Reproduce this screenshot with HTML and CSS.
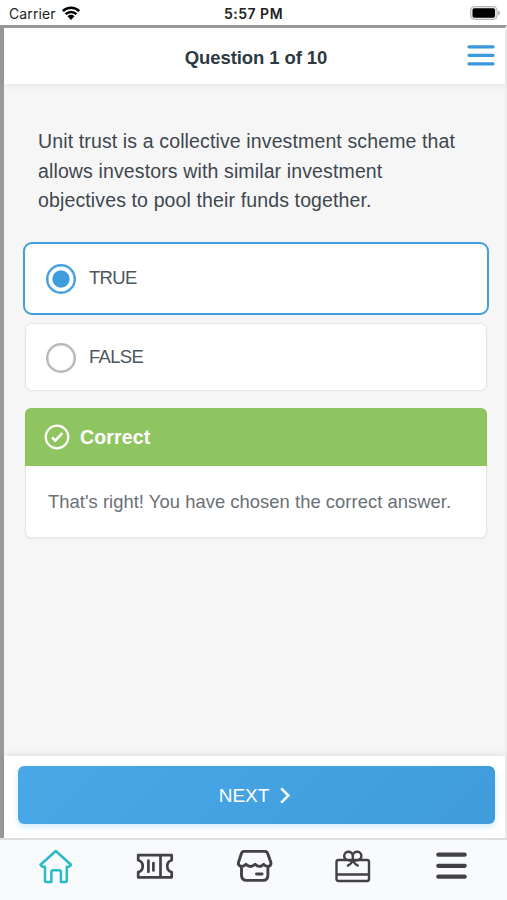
FILE: index.html
```html
<!DOCTYPE html>
<html lang="en">

<head>
    <meta charset="UTF-8">
    <meta name="viewport" content="width=device-width, initial-scale=1.0">
    <title>Quiz</title>
    <link rel="stylesheet" href="styles.css">
</head>

<body>
    <div class="status-bar">
        <div class="carrier">
            <span>Carrier</span>
            <svg width="20" height="16" viewBox="0 0 20 16">
                <path d="M1.8 5.1a11.8 11.8 0 0 1 16.4 0M4.6 8.2a7.8 7.8 0 0 1 10.8 0" fill="none" stroke="#000" stroke-width="2.5" />
                <path d="M6.5 10.3a5 5 0 0 1 7 0L10 14.1z" />
            </svg>
        </div>
        <div class="time">5:57 PM</div>
        <svg class="battery" width="32" height="16" viewBox="0 0 32 16">
            <rect x="1.5" y=".5" width="26.6" height="13" rx="4" fill="#e4e4e4" stroke="#b4b4b4" />
            <rect x="3.5" y="2.3" width="22.5" height="9.5" rx="1.8" />
            <path d="M29.2 4.8v4.6q1.8-.5 1.8-2.3T29.2 4.8z" fill="#aaa" />
        </svg>
    </div>

    <div class="page">
        <header class="header">
            <h1>Question 1 of 10</h1>
            <svg class="menu-btn" width="28" height="22" viewBox="0 0 28 22">
                <path d="M2 1.8h24M2 10.3h24M2 18.8h24" stroke="#3b99dc" stroke-width="3.3" stroke-linecap="round" />
            </svg>
        </header>

        <main class="content">
            <p class="question">Unit trust is a collective investment scheme that<br>allows investors with similar investment<br>objectives to pool their funds together.</p>

            <div class="options">
                <div class="option selected">
                    <span class="radio"></span>
                    <span class="option-text">TRUE</span>
                </div>
                <div class="option">
                    <span class="radio"></span>
                    <span class="option-text">FALSE</span>
                </div>
            </div>

            <div class="result">
                <div class="result-title">
                    <svg width="26" height="26" viewBox="0 0 26 26" fill="none" stroke="#fff">
                        <circle cx="13" cy="13" r="11.3" stroke-width="2.2" />
                        <path d="M8 13.3l3.3 3.3 7-7.4" stroke-width="2.6" />
                    </svg>
                    <span class="result-name">Correct</span>
                </div>
                <div class="result-body"><span class="result-text">That's right! You have chosen the correct answer.</span></div>
            </div>
        </main>

        <footer class="footer">
            <button class="next">
                <span>NEXT</span>
                <svg width="12" height="18" viewBox="0 0 12 18">
                    <path d="M2.2 1.3L9.4 8.5l-7.2 7.2" fill="none" stroke="#fff" stroke-width="2.5" />
                </svg>
            </button>
        </footer>
    </div>

    <nav class="tabs">
        <!-- home -->
        <svg class="tab active" viewBox="0 0 40 40">
            <path d="M19.8 5L35 18.8l-1.8 1.9H30.8V34.6Q30.8 36 29.4 36H24.9V26Q24.9 24.2 23.1 24.2H17.2Q15.4 24.2 15.4 26V36H10.4Q9 36 9 34.6V20.7H6.2L4.5 18.8z" />
        </svg>
        <!-- ticket -->
        <svg class="tab" viewBox="0 0 40 40">
            <path d="M3.2 9.2H36.7V14.3C30.8 15.8 30.8 24.6 36.7 26V31.3H3.2V26C9.2 24.6 9.2 15.8 3.2 14.3zM25.5 9.2V31.3M13.4 14.5V25.8M18.4 17V24.5" />
        </svg>
        <!-- store -->
        <svg class="tab store" viewBox="0 0 40 40">
            <path d="M10 5.4H31Q33 5.4 33.6 7.3L36.8 16.2Q37.5 19.5 34.3 20.5Q31.6 20.6 29.7 18.3Q25.5 22.6 21.1 18.2Q16.4 22.6 12 18.3Q10 20.6 6.9 20.3Q3.7 19.2 4.6 16L7.5 7.3Q8.1 5.4 10 5.4zM7.5 20.4V28.9Q7.5 34.4 12.8 34.4H28.9Q33.9 34.4 33.9 28.9V20.4M22.5 28H28.1" />
        </svg>
        <!-- gift -->
        <svg class="tab gift" viewBox="0 0 40 40">
            <path d="M5.5 14H34Q36 14 36 16V33Q36 35 34 35H5.5Q3.5 35 3.5 33V16Q3.5 14 5.5 14zM3.5 28.5H36M19.8 14C15.5 15.2 11.2 14 11.2 10C11.2 4.3 19.8 4.3 19.8 10V14C24 15.2 28.4 14 28.4 10C28.4 4.3 19.8 4.3 19.8 10M19.8 14Q18.6 17.8 14.8 19.6M19.8 14Q21 17.8 24.8 19.6" />
        </svg>
        <!-- more -->
        <svg class="tab more" viewBox="0 0 40 40">
            <path d="M6.3 8.7H32.7M6.3 19.8H32.7M6.3 30.7H32.7" />
        </svg>
    </nav>
</body>

</html>
```

FILE: styles.css
```css
* {
    margin: 0;
    padding: 0;
    box-sizing: border-box;
}

body {
    width: 507px;
    height: 900px;
    display: flex;
    flex-direction: column;
    background-color: #fff;
    font-family: "Liberation Sans", Arial, sans-serif;
    color: #3e474f;
    overflow: hidden;
}

svg {
    display: block;
    flex: none;
}

/* status bar */
.status-bar {
    height: 25px;
    display: grid;
    grid-template-columns: 1fr auto 1fr;
    align-items: center;
    padding: 2px 6px 0 9px;
    font-family: Inter, sans-serif;
    color: #222;
}

.carrier {
    display: flex;
    align-items: center;
    gap: 5px;
    font-size: 14px;
    letter-spacing: 0.1px;
}

.time {
    margin-right: 3px;
    font-size: 14px;
    font-weight: 600;
    letter-spacing: 0.5px;
}

.battery {
    justify-self: end;
}

/* page */
.page {
    height: 813px;
    display: flex;
    flex-direction: column;
    border-top: 3px solid #999;
    border-left: 4px solid #999;
    border-right: 2px solid #eee;
    background-color: #f6f6f6;
}

.header {
    height: 56px;
    flex: none;
    display: grid;
    grid-template-columns: 1fr auto 1fr;
    align-items: center;
    padding: 0 10px 0 13px;
    background-color: #fff;
    box-shadow: 0 2px 6px rgba(0, 0, 0, 0.07);
}

.header h1 {
    grid-column: 2;
    padding-top: 4px;
    font-size: 18.5px;
    letter-spacing: -0.1px;
    color: #2d3a42;
}

.menu-btn {
    justify-self: end;
    margin-bottom: 1px;
}

.content {
    flex: 1;
    padding: 43px 16px 0 19px;
}

.question {
    padding-left: 15px;
    font-size: 19.5px;
    line-height: 29.5px;
    letter-spacing: 0.13px;
    white-space: nowrap;
}

.options {
    display: flex;
    flex-direction: column;
    gap: 8px;
    margin-top: 26px;
}

.option {
    height: 68px;
    margin: 0 2px;
    padding-left: 20px;
    display: flex;
    align-items: center;
    gap: 13px;
    border: 1px solid #e8e8e8;
    border-radius: 7px;
    background-color: #fff;
    box-shadow: 0 0 2px rgba(0, 0, 0, 0.06);
    font-size: 18.5px;
    letter-spacing: -0.7px;
    color: #50565e;
}

.option.selected {
    height: 73px;
    margin: 0;
    padding-left: 21px;
    border: 2px solid #439fdc;
    border-radius: 9px;
}

.radio {
    width: 30px;
    height: 30px;
    margin-top: 2px;
    border: 2px solid #b5b8b9;
    border-radius: 50%;
    box-shadow: inset 0 0 0 0.5px #b5b8b9;
}

.selected .radio {
    border-color: #439fdc;
    background: radial-gradient(circle, #3e9ddd 8.2px, #fff 9px);
    box-shadow: inset 0 0 0 0.5px #439fdc;
}

/* result */
.result {
    height: 130px;
    margin: 17px 2px 0;
    border: 1px solid #e9e9e9;
    border-top: 0;
    border-radius: 6px;
    background-color: #fff;
    box-shadow: 0 1px 2px rgba(0, 0, 0, 0.05);
}

.result-title {
    height: 58px;
    margin: 0 -1px;
    padding-left: 19px;
    display: flex;
    align-items: center;
    gap: 10px;
    border-radius: 6px 6px 0 0;
    background-color: #8fc560;
    font-size: 19.5px;
    font-weight: bold;
    letter-spacing: 0.15px;
    color: #fff;
}

.result-name {
    padding-top: 1px;
}

.result-body {
    height: 71px;
    padding: 1px 0 0 22px;
    display: flex;
    align-items: center;
    font-size: 18.4px;
    letter-spacing: 0.04px;
    color: #697076;
    white-space: nowrap;
}

/* footer */
.footer {
    height: 82px;
    flex: none;
    padding: 10px 10px 0 14px;
    background-color: #fff;
    box-shadow: 0 -2px 6px rgba(0, 0, 0, 0.08);
}

.next {
    width: 100%;
    height: 58px;
    display: flex;
    align-items: center;
    justify-content: center;
    gap: 10px;
    padding: 1px 3px 0 0;
    border: 0;
    border-radius: 6px;
    background: linear-gradient(135deg, #48a8e8, #409cdb);
    box-shadow: 0 3px 6px rgba(66, 170, 240, 0.25);
    font-family: inherit;
    font-size: 19px;
    color: #fff;
}

/* bottom tabs */
.tabs {
    height: 62px;
    flex: none;
    display: grid;
    grid-template-columns: repeat(5, 1fr);
    justify-items: center;
    padding: 6px 5.5px 0 6.5px;
    border-top: 2px solid #dcdce1;
    background-color: #f9fafc;
}

.tab {
    width: 40px;
    height: 40px;
    fill: none;
    stroke: #424244;
    stroke-width: 2.7;
    stroke-linejoin: round;
    stroke-linecap: round;
}

.tab.active {
    stroke: #29bcc5;
    stroke-width: 2.5;
}

.tab.store {
    stroke-width: 2.9;
}

.tab.gift {
    stroke-width: 2.4;
}

.tab.more {
    stroke-width: 4.2;
}
```
